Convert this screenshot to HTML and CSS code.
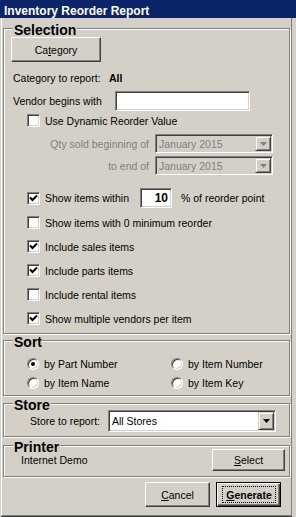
FILE: index.html
```html
<!DOCTYPE html>
<html lang="en">
<head>
    <meta charset="UTF-8">
    <meta name="viewport" content="width=device-width, initial-scale=1.0">
    <title>Inventory Reorder Report</title>
    <link rel="stylesheet" href="styles.css">
</head>
<body>
    <div class="window">
        <div class="titlebar">Inventory Reorder Report</div>
        <div class="panel">

            <div class="group group-selection">
                <div class="group-title">Selection</div>
                <button class="btn btn-category">Ca<u>t</u>egory</button>
                <div class="row cat-row">
                    <span class="cat-label">Category to report:</span><b>All</b>
                </div>
                <div class="row vendor-row">
                    <span class="vendor-label">Vendor begins with</span>
                    <input class="field vendor-input" type="text">
                </div>
                <div class="check-row dyn-row"><span class="cb"></span>Use Dynamic Reorder Value</div>
                <div class="row date-row date-first">
                    <span class="date-label">Qty sold beginning of</span>
                    <div class="combo disabled date-combo">
                        <span class="combo-text">January 2015</span>
                        <span class="combo-btn"><svg width="7" height="4" viewBox="0 0 7 4"><polygon points="0,0 7,0 3.5,4"/></svg></span>
                    </div>
                </div>
                <div class="row date-row date-second">
                    <span class="date-label">to end of</span>
                    <div class="combo disabled date-combo">
                        <span class="combo-text">January 2015</span>
                        <span class="combo-btn"><svg width="7" height="4" viewBox="0 0 7 4"><polygon points="0,0 7,0 3.5,4"/></svg></span>
                    </div>
                </div>
                <div class="row within-row">
                    <span class="within-label"><span class="cb"><svg width="9" height="9" viewBox="0 0 9 9"><polyline points="1,3.5 3.5,6 8,1.5"/></svg></span>Show items within</span>
                    <input class="field pct-input" type="text" value="10">
                    <span class="pct-text">% of reorder point</span>
                </div>
                <div class="checks">
                    <div class="check-row"><span class="cb"></span>Show items with 0 minimum reorder</div>
                    <div class="check-row"><span class="cb"><svg width="9" height="9" viewBox="0 0 9 9"><polyline points="1,3.5 3.5,6 8,1.5"/></svg></span>Include sales items</div>
                    <div class="check-row"><span class="cb"><svg width="9" height="9" viewBox="0 0 9 9"><polyline points="1,3.5 3.5,6 8,1.5"/></svg></span>Include parts items</div>
                    <div class="check-row"><span class="cb"></span>Include rental items</div>
                    <div class="check-row"><span class="cb"><svg width="9" height="9" viewBox="0 0 9 9"><polyline points="1,3.5 3.5,6 8,1.5"/></svg></span>Show multiple vendors per item</div>
                </div>
            </div>

            <div class="group group-sort">
                <div class="group-title">Sort</div>
                <div class="radios">
                    <div class="radio-row"><span class="radio on"></span>by Part Number</div>
                    <div class="radio-row"><span class="radio"></span>by Item Number</div>
                    <div class="radio-row"><span class="radio"></span>by Item Name</div>
                    <div class="radio-row"><span class="radio"></span>by Item Key</div>
                </div>
            </div>

            <div class="group group-store">
                <div class="group-title">Store</div>
                <div class="row store-row">
                    <span class="store-label">Store to report:</span>
                    <div class="combo store-combo">
                        <span class="combo-text">All Stores</span>
                        <span class="combo-btn"><svg width="7" height="4" viewBox="0 0 7 4"><polygon points="0,0 7,0 3.5,4"/></svg></span>
                    </div>
                </div>
            </div>

            <div class="group group-printer">
                <div class="group-title">Printer</div>
                <div class="row printer-row">
                    <span class="printer-name">Internet Demo</span>
                    <button class="btn btn-select"><u>S</u>elect</button>
                </div>
            </div>

            <div class="actions">
                <button class="btn btn-action"><u>C</u>ancel</button>
                <button class="btn btn-action btn-default"><span class="focus"><u>G</u>enerate</span></button>
            </div>
        </div>
    </div>
</body>
</html>
```

FILE: styles.css
```css
body {
    margin: 0;
    width: 296px;
    height: 517px;
    overflow: hidden;
    background-color: #d4d0c8;
    font-family: "Liberation Sans", Arial, sans-serif;
    font-size: 10.5px;
    color: #000;
}

.window {
    width: 296px;
}

.titlebar {
    height: 18px;
    padding-left: 4px;
    background-color: #0a246a;
    color: #fff;
    font-weight: bold;
    font-size: 12px;
    line-height: 22px;
    overflow: hidden;
    white-space: nowrap;
}

.panel {
    width: 291px;
    height: 498px;
    box-sizing: border-box;
    border-left: 1px solid #fff;
    border-right: 1px solid #808080;
    border-bottom: 1px solid #808080;
    box-shadow: 0 1px 0 #404040;
    margin-left: 1px;
    padding-top: 10px;
}

/* etched group boxes */
.group {
    width: 287px;
    box-sizing: border-box;
    margin-left: 1px;
    border: 1px solid #808080;
    box-shadow: inset 1px 1px 0 #fff, 1px 1px 0 #fff;
}

.group-title {
    display: table;
    height: 13px;
    margin: -5px 0 0 9px;
    padding: 0 1px;
    background-color: #d4d0c8;
    font-weight: bold;
    font-size: 14px;
    line-height: 13px;
}

.group-selection { height: 306px; }
.group-sort { height: 56px; margin-top: 6px; }
.group-store { height: 34px; margin-top: 7px; }
.group-printer { height: 32px; margin-top: 8px; }

.row {
    display: flex;
    align-items: center;
}

/* buttons */
.btn {
    box-sizing: border-box;
    margin: 0;
    padding: 0;
    background-color: #d4d0c8;
    border: 1px solid;
    border-color: #fff #404040 #404040 #fff;
    box-shadow: inset -1px -1px 0 #808080;
    font-family: inherit;
    font-size: 10.5px;
    color: #000;
}

.btn-category {
    display: block;
    width: 90px;
    height: 25px;
    margin-left: 7px;
}

.btn-select {
    width: 73px;
    height: 22px;
    margin-right: 4px;
}

.btn-action {
    width: 65px;
    height: 25px;
}

.btn-default {
    border-color: #000;
    box-shadow: inset 1px 1px 0 #fff, inset -1px -1px 0 #404040, inset -2px -2px 0 #808080;
    padding: 3px 4px 3px 5px;
    font-weight: bold;
}

.focus {
    display: flex;
    align-items: center;
    justify-content: center;
    height: 100%;
    border: 1px dotted #000;
    box-sizing: border-box;
}

/* sunken text fields */
.field {
    box-sizing: border-box;
    margin: 0;
    border: 1px solid;
    border-color: #808080 #fff #fff #808080;
    box-shadow: inset 1px 1px 0 #404040, inset -1px -1px 0 #d4d0c8;
    background-color: #fff;
    font-family: inherit;
    outline: none;
}

.cat-row {
    height: 14px;
    margin-top: 9px;
    padding-left: 9px;
}

.cat-label {
    width: 96px;
}

.vendor-row {
    height: 20px;
    margin-top: 6px;
}

.vendor-label {
    width: 111px;
    box-sizing: border-box;
    padding-left: 9px;
}

.vendor-input {
    width: 135px;
    height: 20px;
}

/* checkboxes */
.check-row {
    display: flex;
    align-items: center;
    gap: 5px;
    height: 13px;
    padding-left: 23px;
}

.dyn-row {
    margin-top: 3px;
}

.cb {
    display: flex;
    flex: none;
    width: 13px;
    height: 13px;
    box-sizing: border-box;
    padding: 1px;
    border: 1px solid;
    border-color: #808080 #fff #fff #808080;
    box-shadow: inset 1px 1px 0 #404040, inset -1px -1px 0 #d4d0c8;
    background-color: #fff;
}

.cb polyline {
    fill: none;
    stroke: #000;
    stroke-width: 2;
}

.checks .check-row {
    margin-top: 11px;
}

.checks .check-row:first-child {
    margin-top: 8px;
}

/* combo boxes */
.date-row {
    height: 19px;
}

.date-first { margin-top: 7px; }
.date-second { margin-top: 3px; }

.date-label {
    width: 145px;
    text-align: right;
    color: #808080;
}

.combo {
    display: flex;
    align-items: center;
    box-sizing: border-box;
    padding: 1px;
    border: 1px solid;
    border-color: #808080 #fff #fff #808080;
    box-shadow: inset 1px 1px 0 #404040, inset -1px -1px 0 #d4d0c8;
    background-color: #fff;
}

.combo-text {
    flex: 1;
    padding-left: 2px;
}

.combo-btn {
    display: flex;
    align-items: center;
    justify-content: center;
    width: 16px;
    height: 100%;
    box-sizing: border-box;
    background-color: #d4d0c8;
    border: 1px solid;
    border-color: #d4d0c8 #404040 #404040 #d4d0c8;
    box-shadow: inset 1px 1px 0 #fff, inset -1px -1px 0 #808080;
}

.combo-btn polygon {
    fill: #000;
}

.date-combo {
    width: 118px;
    height: 19px;
    margin-left: 6px;
}

.combo.disabled {
    background-color: #d4d0c8;
    color: #808080;
}

.combo.disabled polygon {
    fill: #808080;
}

.within-row {
    height: 20px;
    margin-top: 13px;
    padding-left: 23px;
}

.within-label {
    display: flex;
    align-items: center;
    gap: 5px;
    width: 113px;
}

.pct-input {
    width: 32px;
    height: 20px;
    padding: 0 3px 0 0;
    text-align: right;
    font-weight: bold;
    font-size: 12px;
}

.pct-text {
    margin-left: 9px;
}

/* radios */
.radios {
    display: grid;
    grid-template-columns: 144px 1fr;
    row-gap: 6px;
    margin-top: 8px;
    padding-left: 23px;
}

.radio-row {
    display: flex;
    align-items: center;
    gap: 5px;
    height: 13px;
}

.radio {
    display: flex;
    align-items: center;
    justify-content: center;
    width: 12px;
    height: 12px;
    box-sizing: border-box;
    border-radius: 50%;
    border: 1px solid;
    border-color: #808080 #fff #fff #808080;
    box-shadow: inset 1px 1px 0 #404040, inset -1px -1px 0 #d4d0c8;
    background-color: #fff;
}

.radio.on::before {
    content: "";
    width: 4px;
    height: 4px;
    border-radius: 50%;
    background-color: #000;
}

.store-row {
    height: 22px;
    margin-top: -2px;
}

.store-label {
    width: 104px;
    box-sizing: border-box;
    padding-left: 26px;
}

.store-combo {
    width: 168px;
    height: 22px;
}

.printer-row {
    height: 22px;
    margin-top: -5px;
    justify-content: space-between;
}

.printer-name {
    padding-left: 17px;
}

.actions {
    display: flex;
    gap: 6px;
    margin-top: 5px;
    padding-left: 143px;
}
```
